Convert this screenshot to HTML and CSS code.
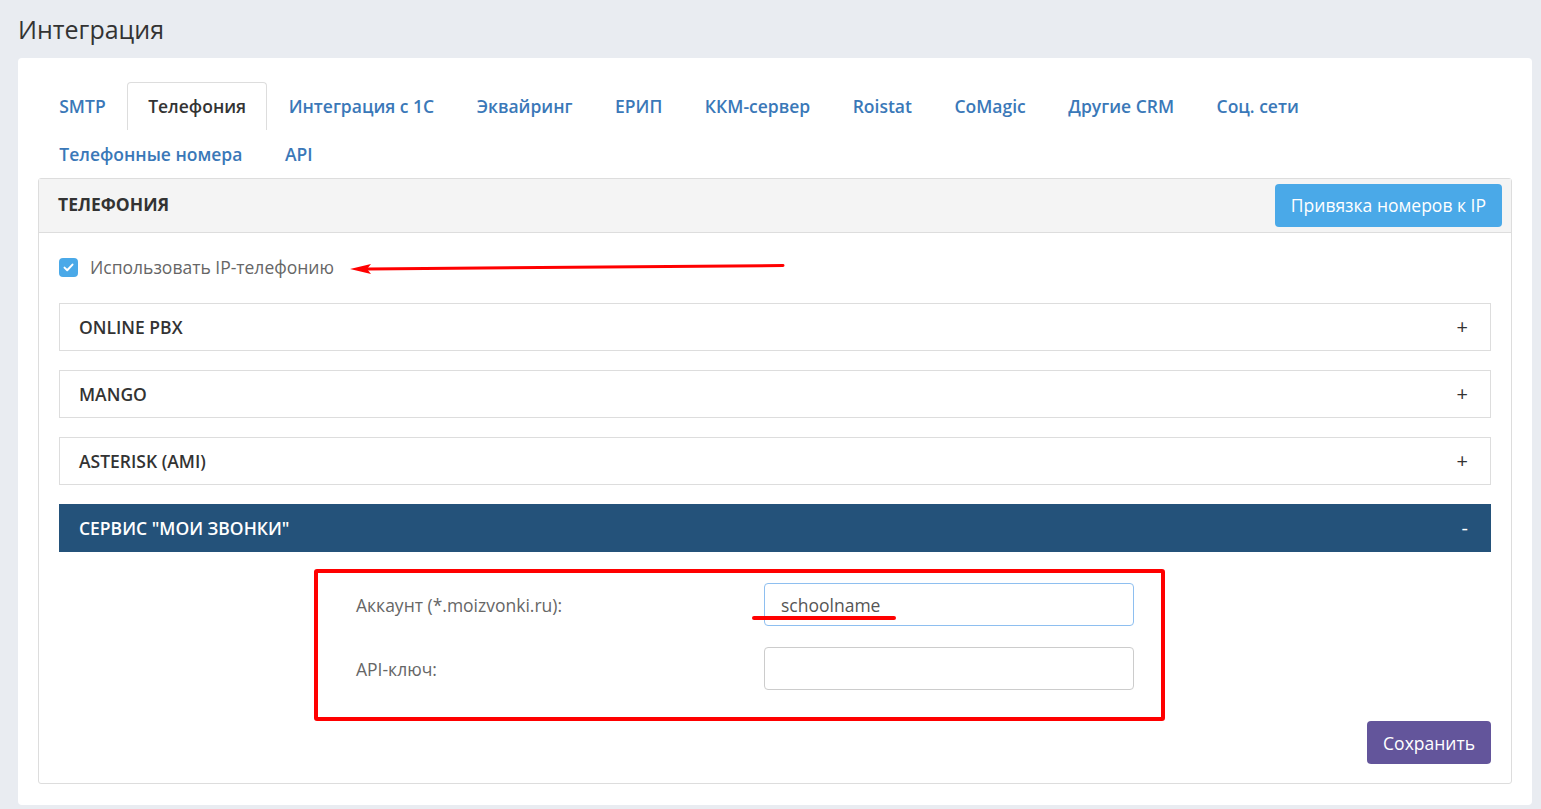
FILE: index.html
```html
<!DOCTYPE html>
<html lang="ru">
<head>
    <meta charset="UTF-8">
    <title>Интеграция</title>
    <link rel="stylesheet" href="styles.css">
</head>
<body>
    <div class="page">
        <h1 class="page-title">Интеграция</h1>
        <div class="card">
            <ul class="tabs">
                <li><a href="#">SMTP</a></li>
                <li class="active"><a href="#">Телефония</a></li>
                <li><a href="#">Интеграция с 1С</a></li>
                <li><a href="#">Эквайринг</a></li>
                <li><a href="#">ЕРИП</a></li>
                <li><a href="#">ККМ-сервер</a></li>
                <li><a href="#">Roistat</a></li>
                <li><a href="#">CoMagic</a></li>
                <li><a href="#">Другие CRM</a></li>
                <li><a href="#">Соц. сети</a></li>
                <li><a href="#">Телефонные номера</a></li>
                <li><a href="#">API</a></li>
            </ul>

            <div class="panel">
                <div class="panel-head">
                    <span class="panel-title">ТЕЛЕФОНИЯ</span>
                    <button class="btn btn-blue">Привязка номеров к IP</button>
                </div>
                <div class="panel-body">
                    <label class="check-row">
                        <span class="checkbox">
                            <svg width="11" height="9" viewBox="0 0 11 9"><path d="M1.5 4.6 L4.2 7.2 L9.5 1.6" fill="none" stroke="#fff" stroke-width="2" stroke-linecap="round" stroke-linejoin="round"/></svg>
                        </span>
                        <span class="check-label">Использовать IP-телефонию</span>
                        <svg class="note-arrow" width="440" height="20" viewBox="0 0 440 20">
                            <path d="M433 6.5 L18 10" stroke="#f00" stroke-width="3" stroke-linecap="round"/>
                            <polygon points="0,10 21,5 17,10 21,15" fill="#f00"/>
                        </svg>
                    </label>

                    <div class="acc-item">ONLINE PBX<span>+</span></div>
                    <div class="acc-item">MANGO<span>+</span></div>
                    <div class="acc-item">ASTERISK (AMI)<span>+</span></div>
                    <div class="acc-item open">СЕРВИС "МОИ ЗВОНКИ"<span>-</span></div>

                    <div class="form-box">
                        <div class="form-row">
                            <label>Аккаунт (*.moizvonki.ru):</label>
                            <div class="field">
                                <input class="input focused" type="text" value="schoolname">
                                <span class="note-line"></span>
                            </div>
                        </div>
                        <div class="form-row">
                            <label>API-ключ:</label>
                            <div class="field">
                                <input class="input" type="text" value="">
                            </div>
                        </div>
                    </div>

                    <div class="actions">
                        <button class="btn btn-purple">Сохранить</button>
                    </div>
                </div>
            </div>
        </div>
    </div>
</body>
</html>
```

FILE: styles.css
```css
* {
    box-sizing: border-box;
}
body {
    margin: 0;
    background: #e9ecf1;
    font-family: "Open Sans", "Liberation Sans", sans-serif;
    color: #333;
}
.page {
    padding: 0 9px 5px 18px;
}
.page-title {
    margin: 0;
    height: 58px;
    line-height: 58px;
    font-size: 25px;
    font-weight: 400;
    color: #333;
}
.card {
    background: #fff;
    border-radius: 4px;
    padding: 24px 20px 21px 20px;
}

/* tabs */
.tabs {
    list-style: none;
    margin: 0;
    padding: 0;
    display: flex;
    flex-wrap: wrap;
}
.tabs li {
    height: 48px;
    border: 1px solid transparent;
    border-bottom: none;
    border-radius: 4px 4px 0 0;
}
.tabs li a {
    display: block;
    padding: 0 20.25px;
    line-height: 47px;
    font-size: 17.5px;
    font-weight: 600;
    color: #3a78b8;
    text-decoration: none;
}
.tabs li.active {
    border-color: #ddd;
    background: #fff;
}
.tabs li.active a {
    color: #333;
}

/* panel */
.panel {
    border: 1px solid #ddd;
    border-radius: 3px;
}
.panel-head {
    height: 54px;
    background: #f4f4f4;
    border-bottom: 1px solid #ddd;
    display: flex;
    align-items: center;
    justify-content: space-between;
    padding: 0 9px 1px 19px;
}
.panel-title {
    margin-bottom: 3px;
    font-size: 17.5px;
    font-weight: 700;
    color: #333;
}
.btn {
    height: 43px;
    border: none;
    border-radius: 4px;
    padding: 0 16px;
    font-family: inherit;
    font-size: 17.5px;
    color: #fff;
    cursor: pointer;
}
.btn-blue {
    background: #4aa9e8;
}
.btn-purple {
    background: #63559b;
}
.panel-body {
    padding: 24px 20px 19px 20px;
}

/* checkbox */
.check-row {
    position: relative;
    display: flex;
    align-items: center;
    height: 20px;
    margin-bottom: 26px;
}
.checkbox {
    width: 19px;
    height: 19px;
    border-radius: 4px;
    background: #4aa9e8;
    display: flex;
    align-items: center;
    justify-content: center;
    margin-right: 12px;
}
.check-label {
    font-size: 17.5px;
    color: #666;
}
.note-arrow {
    position: absolute;
    left: 291px;
    top: 2px;
}

/* accordion */
.acc-item {
    height: 48px;
    border: 1px solid #ddd;
    margin-bottom: 19px;
    padding: 0 22px 1px 19px;
    display: flex;
    align-items: center;
    justify-content: space-between;
    font-size: 17.5px;
    font-weight: 600;
    color: #333;
}
.acc-item span {
    font-weight: 400;
    font-size: 20px;
}
.acc-item.open {
    background: #24527a;
    border-color: #24527a;
    color: #fff;
    margin-bottom: 0;
}

/* form */
.form-box {
    width: 851px;
    margin: 17px 0 0 255px;
    border: 4px solid #f00;
    border-radius: 3px;
    padding: 10px 0 27px 38px;
}
.form-row {
    display: flex;
    align-items: center;
}
.form-row + .form-row {
    margin-top: 21px;
}
.form-row label {
    width: 408px;
    font-size: 17.5px;
    color: #666;
}
.field {
    position: relative;
}
.input {
    width: 370px;
    height: 43px;
    border: 1px solid #ccc;
    border-radius: 4px;
    padding: 0 16px;
    font-family: inherit;
    font-size: 17.5px;
    color: #555;
    outline: none;
}
.input.focused {
    border-color: #8ebff0;
}
.note-line {
    position: absolute;
    left: -12px;
    top: 33px;
    width: 144px;
    height: 4px;
    border-radius: 2px;
    background: #f00;
}
.actions {
    display: flex;
    justify-content: flex-end;
}
```
